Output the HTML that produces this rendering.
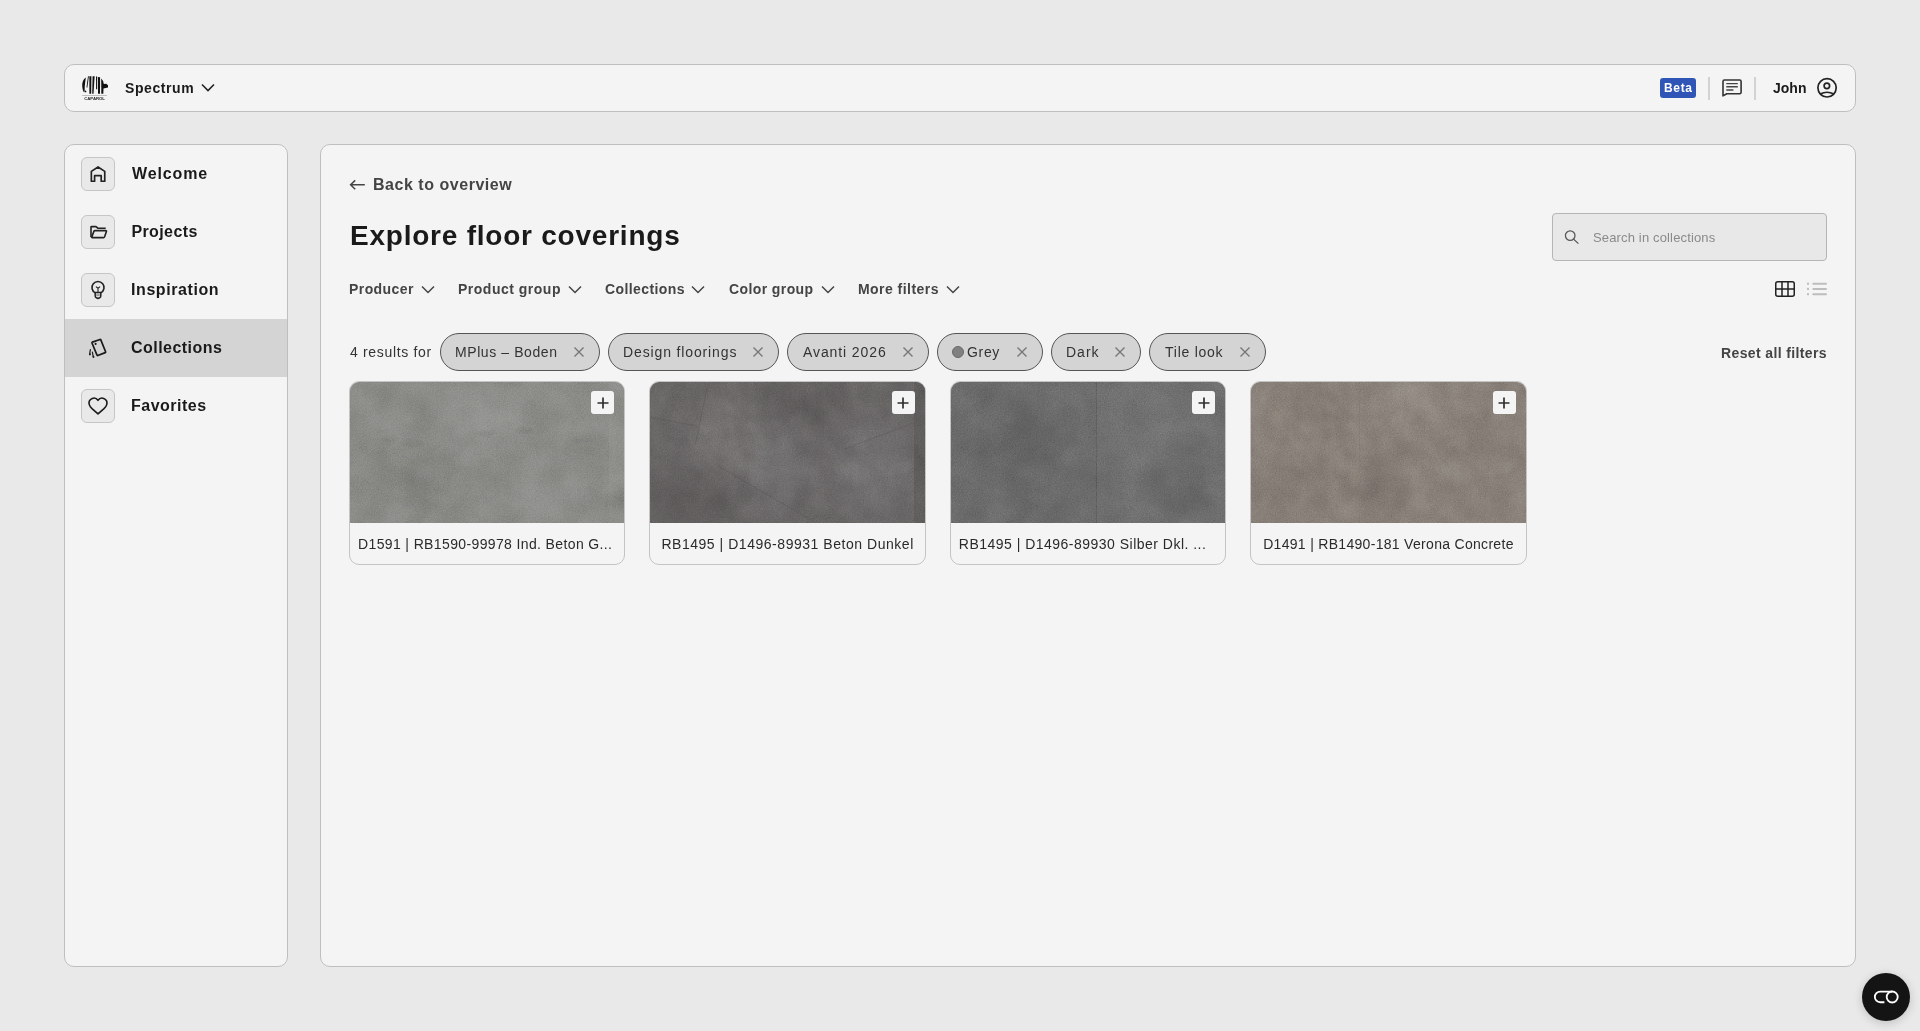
<!DOCTYPE html>
<html><head><meta charset="utf-8">
<style>
*{box-sizing:border-box;margin:0;padding:0}
html,body{width:1920px;height:1031px;overflow:hidden;background:#e9e9e9;font-family:"Liberation Sans",sans-serif;color:#1a1a1a}
.abs{position:absolute}
.panel{position:absolute;background:#f4f4f4;border:1px solid #bfbfbf;border-radius:10px}
.t{position:absolute;white-space:nowrap;line-height:1}
.b{font-weight:bold}
.icobox{position:absolute;left:16px;width:34px;height:34px;border:1px solid #c6c6c6;border-radius:6px;background:#e9e9e9}
.icobox svg{position:absolute;left:0;top:0}
.nav{position:absolute;left:0;width:222px;height:58px}
.nav .t{left:66px;font-size:16px;font-weight:bold;color:#1a1a1a}
.chip{position:absolute;top:333px;height:38px;border:1px solid #555;border-radius:19px;background:#d4d4d4}
.chip .t{top:11px;font-size:14px;color:#333}
.chip svg{position:absolute;top:13px}
.card{position:absolute;top:381px;width:276.4px;height:184px;border:1px solid #c4c4c4;border-radius:10px;background:#f4f4f4;overflow:hidden}
.card .img{position:absolute;left:-1px;top:-1px;right:-1px;height:142px;overflow:hidden}
.card .img svg{display:block}
.card .cap{position:absolute;left:9px;top:155px;font-size:14px;line-height:1;white-space:nowrap;color:#2a2a2a}
.plus{position:absolute;right:10px;top:9px;width:23px;height:23px;border-radius:3px;background:#f4f4f4}
.plus svg{position:absolute;left:5.5px;top:5.5px}
.flt{position:absolute;top:282px;font-size:14px;font-weight:bold;color:#444}
</style></head>
<body>

<svg width="0" height="0" style="position:absolute">
<defs>
<filter id="grain" x="0" y="0" width="100%" height="100%" color-interpolation-filters="sRGB"><feTurbulence type="fractalNoise" baseFrequency="0.75" numOctaves="2" seed="7" stitchTiles="stitch"/><feColorMatrix type="matrix" values="0.33 0.33 0.33 0 0  0.33 0.33 0.33 0 0  0.33 0.33 0.33 0 0  0 0 0 0 1"/></filter>
<filter id="blot" x="0" y="0" width="100%" height="100%" color-interpolation-filters="sRGB"><feTurbulence type="fractalNoise" baseFrequency="0.035" numOctaves="4" seed="11"/><feColorMatrix type="matrix" values="0.33 0.33 0.33 0 0  0.33 0.33 0.33 0 0  0.33 0.33 0.33 0 0  0 0 0 0 1"/></filter>
<filter id="blot2" x="0" y="0" width="100%" height="100%" color-interpolation-filters="sRGB"><feTurbulence type="fractalNoise" baseFrequency="0.05" numOctaves="4" seed="23"/><feColorMatrix type="matrix" values="0.33 0.33 0.33 0 0  0.33 0.33 0.33 0 0  0.33 0.33 0.33 0 0  0 0 0 0 1"/></filter>
<filter id="bl6" x="-50%" y="-50%" width="200%" height="200%"><feGaussianBlur stdDeviation="6"/></filter>
<filter id="bl12" x="-50%" y="-50%" width="200%" height="200%"><feGaussianBlur stdDeviation="12"/></filter>
<filter id="bl2" x="-50%" y="-50%" width="200%" height="200%"><feGaussianBlur stdDeviation="1.5"/></filter>
</defs></svg>
<!-- header -->
<div class="panel" style="left:64px;top:64px;width:1792px;height:48px;"></div>
<svg class="abs" style="left:81px;top:75px" width="28" height="26" viewBox="0 0 28 26">
  <g fill="#111">
    <path d="M4.8 2.4 C2.2 4 1.1 7.5 1.2 10.5 C1.3 13.5 1.9 15.5 2.7 16.9 L3.6 16.2 C3.6 13 3.8 9.5 4.3 6.5 C4.5 5 4.7 3.6 4.8 2.4 Z"/>
    <circle cx="4.4" cy="16.4" r="0.95"/>
    <path d="M7 1.2 L7.9 1.2 L6.3 12.8 L5.5 12.2 Z"/>
    <path d="M8.4 1.2 L10.4 1.2 L10.2 18.8 L8.4 18.8 Z"/>
    <path d="M11.6 1.2 L13.6 1.3 L12.5 18.8 L11.2 18.8 Z"/>
    <path d="M15 1.5 L16.1 1.5 L16.1 14.2 L15.1 14.2 Z"/>
    <path d="M16.9 2 L19.1 2.3 L19 18.8 L17 18.8 Z"/>
    <path d="M20.2 3.5 Q22.5 5.5 22.8 9 L25.2 8.8 L27 10.2 L27 12.6 L22.5 13.6 L22.3 18.8 L20.3 18.8 Z"/>
  </g>
  <rect x="1.2" y="20.3" width="24.8" height="0.6" fill="#9a9a9a"/>
  <text x="13.6" y="24.9" font-size="4.4" text-anchor="middle" font-family="Liberation Sans" font-weight="bold" fill="#222" textLength="20.8" lengthAdjust="spacingAndGlyphs">CAPAROL</text>
</svg>
<div id="spectrum" class="t b" style="left:125.00px;top:81px;font-size:14px;letter-spacing:0.572px">Spectrum</div>
<svg class="abs" style="left:201px;top:83px" width="14" height="9" viewBox="0 0 14 9"><path d="M1 1.5 L7 7.5 L13 1.5" fill="none" stroke="#222" stroke-width="1.6"/></svg>

<div class="abs" style="left:1660px;top:78px;width:36px;height:20px;background:#2f56b6;border-radius:3px"></div>
<div id="beta" class="t b" style="left:1664.00px;top:82px;font-size:12px;color:#fff;letter-spacing:0.667px">Beta</div>
<div class="abs" style="left:1708px;top:77px;width:2px;height:23px;background:#d2d2d2"></div>
<svg class="abs" style="left:1721px;top:78px" width="22" height="20" viewBox="0 0 22 20"><path d="M2 17.9 V3.4 Q2 2 3.4 2 H18.7 Q20.1 2 20.1 3.4 V14.3 Q20.1 15.7 18.7 15.7 H5.8 Z" fill="none" stroke="#333" stroke-width="1.6" stroke-linejoin="round"/><path d="M5.3 5.6 H16.8 M5.3 8.7 H16.8 M5.3 12 H12.4" stroke="#444" stroke-width="1.4"/></svg>
<div class="abs" style="left:1754px;top:77px;width:2px;height:23px;background:#d2d2d2"></div>
<div id="john" class="t b" style="left:1773.00px;top:81px;font-size:14px;letter-spacing:-0.000px">John</div>
<svg class="abs" style="left:1816px;top:77px" width="22" height="22" viewBox="0 0 22 22"><circle cx="11.05" cy="10.85" r="9.15" fill="none" stroke="#222" stroke-width="1.7"/><circle cx="10.85" cy="8.85" r="2.75" fill="none" stroke="#222" stroke-width="1.7"/><path d="M4.3 17.1 Q11 13.4 17.8 17.1" fill="none" stroke="#222" stroke-width="1.7"/></svg>

<!-- sidebar -->
<div class="panel" style="left:64px;top:144px;width:224px;height:823px;overflow:hidden">
  <div class="nav" style="top:0"><div class="icobox" style="top:12px">
    <svg width="32" height="32" viewBox="0 0 32 32"><path d="M12.6 23.25 V17.7 H19.2 V23.25 H22.75 V13.4 L16.05 8.95 L9.35 13.4 V23.25 Z" fill="none" stroke="#222" stroke-width="1.7" stroke-linejoin="round"/></svg>
  </div><div id="welcome" class="t" style="left:67.00px;top:20.8px;letter-spacing:0.867px">Welcome</div></div>
  <div class="nav" style="top:58px"><div class="icobox" style="top:12px">
    <svg width="32" height="32" viewBox="0 0 32 32"><path d="M9 21 V10.8 Q9 10.6 9.8 10.6 H14 L15.8 12.2 H23.7" fill="none" stroke="#222" stroke-width="1.6" stroke-linejoin="round"/><path d="M9.6 21.4 L11.9 15.4 Q12.2 14.6 13 14.6 H23.8 Q24.7 14.6 24.4 15.5 L22.6 20.8 Q22.3 21.6 21.5 21.6 H10 Z" fill="none" stroke="#222" stroke-width="1.6" stroke-linejoin="round"/></svg>
  </div><div id="projects" class="t" style="left:66.40px;top:20.8px;letter-spacing:0.400px">Projects</div></div>
  <div class="nav" style="top:116px"><div class="icobox" style="top:12px">
    <svg width="32" height="32" viewBox="0 0 32 32"><path d="M13.3 18.9 A6.05 6.05 0 1 1 18.7 18.9" fill="none" stroke="#222" stroke-width="1.6"/><path d="M13.2 18.6 V22 Q13.2 23.2 14.4 23.8 L16 24.5 L17.6 23.8 Q18.8 23.2 18.8 22 V18.6 Z" fill="none" stroke="#222" stroke-width="1.5" stroke-linejoin="round"/><path d="M14.2 20.3 H17.8 M14.2 21.6 H17.8" stroke="#888" stroke-width="0.9"/><path d="M13.9 12.6 L16 14.3 L18.1 12.6 M16 14.3 V18.4" fill="none" stroke="#222" stroke-width="1.1"/></svg>
  </div><div id="inspiration" class="t" style="left:66.00px;top:20.8px;letter-spacing:0.580px">Inspiration</div></div>
  <div class="nav" style="top:174px;background:#d4d4d4"><div class="icobox" style="top:12px;border-color:transparent;background:transparent">
    <svg width="32" height="32" viewBox="0 0 32 32"><path d="M10.4 10.1 L18 7.5 Q18.6 7.3 18.8 7.9 L23.6 19.8 Q23.8 20.4 23.2 20.6 L15.8 23.5 Q15.2 23.7 15 23.1 L10 11 Q9.8 10.3 10.4 10.1 Z" fill="none" stroke="#1a1a1a" stroke-width="1.7" stroke-linejoin="round"/><circle cx="13.6" cy="11.9" r="1.05" fill="#1a1a1a"/><path d="M8.4 17.6 Q7.6 20.5 7.8 22.6" fill="none" stroke="#1a1a1a" stroke-width="1.2" stroke-linecap="round"/><path d="M10.4 20 Q10.7 23 11.6 25.2" fill="none" stroke="#1a1a1a" stroke-width="1.2" stroke-linecap="round"/><circle cx="7.9" cy="22.3" r="0.95" fill="#1a1a1a"/><circle cx="11.4" cy="24.7" r="0.95" fill="#1a1a1a"/></svg>
  </div><div id="collections" class="t" style="left:66.00px;top:20.8px;letter-spacing:0.460px">Collections</div></div>
  <div class="nav" style="top:232px"><div class="icobox" style="top:12px">
    <svg width="32" height="32" viewBox="0 0 32 32"><path d="M16 10.3 C14.6 8.3 12.3 7.6 10.3 8.4 C7.9 9.4 6.6 12 7.2 14.4 C7.6 16 8.6 17.3 10 18.6 L16 23.9 L22 18.6 C23.4 17.3 24.4 16 24.8 14.4 C25.4 12 24.1 9.4 21.7 8.4 C19.7 7.6 17.4 8.3 16 10.3 Z" fill="none" stroke="#1a1a1a" stroke-width="1.6" stroke-linejoin="round"/></svg>
  </div><div id="favorites" class="t" style="left:66.00px;top:20.8px;letter-spacing:0.500px">Favorites</div></div>
</div>

<!-- main -->
<div class="panel" style="left:320px;top:144px;width:1536px;height:823px;"></div>
<svg class="abs" style="left:349px;top:177px" width="17" height="16" viewBox="0 0 17 16"><path d="M15.8 7.8 H1.6 M6.2 3.4 L1.6 7.8 L6.2 12.2" fill="none" stroke="#444" stroke-width="1.5"/></svg>
<div id="back" class="t b" style="left:373.00px;top:177px;font-size:16px;color:#444;letter-spacing:0.533px">Back to overview</div>
<div id="title" class="t b" style="left:350.00px;top:222px;font-size:28px;color:#1a1a1a;letter-spacing:0.772px">Explore floor coverings</div>

<div class="abs" style="left:1552px;top:213px;width:275px;height:48px;border:1px solid #b5b5b5;border-radius:4px;background:#e8e8e8"></div>
<svg class="abs" style="left:1563px;top:229px" width="18" height="18" viewBox="0 0 18 18"><circle cx="7.2" cy="6.6" r="4.8" fill="none" stroke="#555" stroke-width="1.25"/><path d="M10.6 10.1 L15.4 14.6" stroke="#555" stroke-width="1.25"/></svg>
<div id="search" class="t" style="left:1593.00px;top:231px;font-size:13px;color:#8a8a8a;letter-spacing:0.150px">Search in collections</div>

<div id="producer" class="flt t" style="left:349.00px;letter-spacing:0.428px">Producer</div>
<svg class="abs" style="left:421px;top:285px" width="14" height="9" viewBox="0 0 14 9"><path d="M1 1.5 L7 7.5 L13 1.5" fill="none" stroke="#444" stroke-width="1.5"/></svg>
<div id="pgroup" class="flt t" style="left:458.00px;letter-spacing:0.500px">Product group</div>
<svg class="abs" style="left:568px;top:285px" width="14" height="9" viewBox="0 0 14 9"><path d="M1 1.5 L7 7.5 L13 1.5" fill="none" stroke="#444" stroke-width="1.5"/></svg>
<div id="fcoll" class="flt t" style="left:605.00px;letter-spacing:0.400px">Collections</div>
<svg class="abs" style="left:691px;top:285px" width="14" height="9" viewBox="0 0 14 9"><path d="M1 1.5 L7 7.5 L13 1.5" fill="none" stroke="#444" stroke-width="1.5"/></svg>
<div id="cgroup" class="flt t" style="left:729.00px;letter-spacing:0.400px">Color group</div>
<svg class="abs" style="left:821px;top:285px" width="14" height="9" viewBox="0 0 14 9"><path d="M1 1.5 L7 7.5 L13 1.5" fill="none" stroke="#444" stroke-width="1.5"/></svg>
<div id="more" class="flt t" style="left:858.00px;letter-spacing:0.453px">More filters</div>
<svg class="abs" style="left:946px;top:285px" width="14" height="9" viewBox="0 0 14 9"><path d="M1 1.5 L7 7.5 L13 1.5" fill="none" stroke="#444" stroke-width="1.5"/></svg>

<svg class="abs" style="left:1774px;top:280px" width="22" height="18" viewBox="0 0 22 18">
  <rect x="1.75" y="1.75" width="18.5" height="14.5" rx="2" fill="none" stroke="#222" stroke-width="1.5"/>
  <path d="M8 1.75 V16.25 M14 1.75 V16.25 M1.75 9 H20.25" stroke="#222" stroke-width="1.5"/>
</svg>
<svg class="abs" style="left:1805px;top:280px" width="24" height="18" viewBox="0 0 24 18">
  <g fill="#bdbdbd"><rect x="2" y="2.7" width="2" height="2"/><rect x="2" y="7.9" width="2" height="2"/><rect x="2" y="13.2" width="2" height="2"/></g>
  <path d="M8.3 3.7 H21 M8.3 8.9 H21 M8.3 14.2 H21" stroke="#bdbdbd" stroke-width="2" stroke-linecap="round"/>
</svg>

<div id="results" class="t" style="left:350.00px;top:345px;font-size:14px;color:#333;letter-spacing:0.665px">4 results for</div>

<div class="chip" style="left:440px;width:160px"><div id="c_mplus" class="t" style="left:14.00px;letter-spacing:0.584px">MPlus – Boden</div><svg style="left:133px" width="10" height="10" viewBox="0 0 10 10"><path d="M0.5 0.5 L9.5 9.5 M9.5 0.5 L0.5 9.5" stroke="#777" stroke-width="1.4"/></svg></div>
<div class="chip" style="left:608px;width:171px"><div id="c_design" class="t" style="left:14.00px;letter-spacing:0.867px">Design floorings</div><svg style="left:144px" width="10" height="10" viewBox="0 0 10 10"><path d="M0.5 0.5 L9.5 9.5 M9.5 0.5 L0.5 9.5" stroke="#777" stroke-width="1.4"/></svg></div>
<div class="chip" style="left:787px;width:142px"><div id="c_avanti" class="t" style="left:15.00px;letter-spacing:0.900px">Avanti 2026</div><svg style="left:115px" width="10" height="10" viewBox="0 0 10 10"><path d="M0.5 0.5 L9.5 9.5 M9.5 0.5 L0.5 9.5" stroke="#777" stroke-width="1.4"/></svg></div>
<div class="chip" style="left:937px;width:106px"><div class="abs" style="left:14px;top:12px;width:12px;height:12px;border-radius:50%;background:#808080;border:1px solid #6a6a6a"></div><div id="c_grey" class="t" style="left:29.00px;letter-spacing:0.666px">Grey</div><svg style="left:79px" width="10" height="10" viewBox="0 0 10 10"><path d="M0.5 0.5 L9.5 9.5 M9.5 0.5 L0.5 9.5" stroke="#777" stroke-width="1.4"/></svg></div>
<div class="chip" style="left:1051px;width:90px"><div id="c_dark" class="t" style="left:14.00px;letter-spacing:0.999px">Dark</div><svg style="left:63px" width="10" height="10" viewBox="0 0 10 10"><path d="M0.5 0.5 L9.5 9.5 M9.5 0.5 L0.5 9.5" stroke="#777" stroke-width="1.4"/></svg></div>
<div class="chip" style="left:1149px;width:117px"><div id="c_tile" class="t" style="left:15.00px;letter-spacing:0.750px">Tile look</div><svg style="left:90px" width="10" height="10" viewBox="0 0 10 10"><path d="M0.5 0.5 L9.5 9.5 M9.5 0.5 L0.5 9.5" stroke="#777" stroke-width="1.4"/></svg></div>

<div id="reset" class="t b" style="left:1721.00px;top:346px;font-size:14px;color:#444;letter-spacing:0.374px">Reset all filters</div>

<!-- cards -->
<div class="card" style="left:349px">
  <div class="img"><svg width="278" height="143" viewBox="0 0 278 143">
<rect width="278" height="143" fill="#8a8a87"/>
<g filter="url(#bl12)"><ellipse cx="140" cy="40" rx="45" ry="10" fill="#9a9a97"/><ellipse cx="60" cy="100" rx="50" ry="25" fill="#838380"/><ellipse cx="200" cy="115" rx="50" ry="20" fill="#8f8f8c"/></g>
<g filter="url(#bl2)" opacity="0.3"><ellipse cx="40" cy="59" rx="8" ry="2.5" fill="#6f6f6c"/><ellipse cx="65" cy="63" rx="10" ry="3.5" fill="#6f6f6c"/><ellipse cx="135" cy="53" rx="10" ry="3" fill="#747471"/><ellipse cx="175" cy="50" rx="9" ry="3" fill="#747471"/><ellipse cx="235" cy="59" rx="12" ry="2.5" fill="#717170"/></g>
<rect x="260" y="0" width="18" height="143" fill="#8e8e8b"/>
<g filter="url(#bl6)"><ellipse cx="272" cy="118" rx="8" ry="10" fill="#737370"/></g>
<rect width="278" height="143" filter="url(#blot)" opacity="0.15" style="mix-blend-mode:overlay"/>
<rect width="278" height="143" filter="url(#grain)" opacity="0.22" style="mix-blend-mode:overlay"/>
</svg></div>
  <div class="plus"><svg width="12" height="12" viewBox="0 0 12 12"><path d="M6 0.5 V11.5 M0.5 6 H11.5" stroke="#2e2e2e" stroke-width="1.7"/></svg></div>
  <div class="cap" id="cap1" style="left:8.00px;letter-spacing:0.370px">D1591 | RB1590-99978 Ind. Beton G...</div>
</div>
<div class="card" style="left:649.4px">
  <div class="img"><svg width="278" height="143" viewBox="0 0 278 143">
<rect width="278" height="143" fill="#686565"/>
<g filter="url(#bl12)"><ellipse cx="75" cy="55" rx="30" ry="45" fill="#747171"/><ellipse cx="130" cy="85" rx="30" ry="40" fill="#726f6f"/><ellipse cx="225" cy="90" rx="40" ry="45" fill="#727070"/><ellipse cx="45" cy="120" rx="50" ry="25" fill="#5e5b5b"/><ellipse cx="150" cy="20" rx="40" ry="20" fill="#5f5c5c"/></g>
<g stroke="#5a5757" stroke-width="1" fill="none" opacity="0.45"><path d="M69 85 L162 139"/><path d="M0 36 L48 45"/><path d="M58 7 L46 65"/><path d="M195 68 L265 42"/></g>
<rect x="265" y="0" width="13" height="143" fill="#5f5c5c"/>
<rect width="278" height="143" filter="url(#blot2)" opacity="0.16" style="mix-blend-mode:overlay"/>
<rect width="278" height="143" filter="url(#grain)" opacity="0.22" style="mix-blend-mode:overlay"/>
</svg></div>
  <div class="plus"><svg width="12" height="12" viewBox="0 0 12 12"><path d="M6 0.5 V11.5 M0.5 6 H11.5" stroke="#2e2e2e" stroke-width="1.7"/></svg></div>
  <div class="cap" id="cap2" style="left:11.00px;letter-spacing:0.533px">RB1495 | D1496-89931 Beton Dunkel</div>
</div>
<div class="card" style="left:949.8px">
  <div class="img"><svg width="278" height="143" viewBox="0 0 278 143">
<rect width="278" height="143" fill="#6c6b6b"/>
<rect x="147" y="0" width="131" height="143" fill="#706f6f"/>
<g filter="url(#bl12)"><ellipse cx="70" cy="60" rx="40" ry="25" fill="#646363"/><ellipse cx="190" cy="50" rx="30" ry="30" fill="#757474"/><ellipse cx="230" cy="110" rx="35" ry="25" fill="#686767"/></g>
<rect x="146" y="0" width="1" height="143" fill="#626161"/>
<rect width="278" height="143" filter="url(#blot)" opacity="0.16" style="mix-blend-mode:overlay"/>
<rect width="278" height="143" filter="url(#grain)" opacity="0.25" style="mix-blend-mode:overlay"/>
</svg></div>
  <div class="plus"><svg width="12" height="12" viewBox="0 0 12 12"><path d="M6 0.5 V11.5 M0.5 6 H11.5" stroke="#2e2e2e" stroke-width="1.7"/></svg></div>
  <div class="cap" id="cap3" style="left:8.00px;letter-spacing:0.485px">RB1495 | D1496-89930 Silber Dkl. ...</div>
</div>
<div class="card" style="left:1250.2px">
  <div class="img"><svg width="278" height="143" viewBox="0 0 278 143">
<rect width="278" height="143" fill="#898179"/>
<g filter="url(#bl12)"><ellipse cx="125" cy="105" rx="18" ry="35" fill="#7b736d"/><ellipse cx="165" cy="20" rx="30" ry="20" fill="#938b83"/><ellipse cx="225" cy="50" rx="20" ry="15" fill="#7f7771"/><ellipse cx="40" cy="110" rx="40" ry="25" fill="#837b74"/><ellipse cx="70" cy="30" rx="30" ry="20" fill="#837b74"/></g>
<rect x="109" y="0" width="1" height="143" fill="#807870" opacity="0.6"/>
<rect width="278" height="143" filter="url(#blot2)" opacity="0.15" style="mix-blend-mode:overlay"/>
<rect width="278" height="143" filter="url(#grain)" opacity="0.22" style="mix-blend-mode:overlay"/>
</svg></div>
  <div class="plus"><svg width="12" height="12" viewBox="0 0 12 12"><path d="M6 0.5 V11.5 M0.5 6 H11.5" stroke="#2e2e2e" stroke-width="1.7"/></svg></div>
  <div class="cap" id="cap4" style="left:12.00px;letter-spacing:0.303px">D1491 | RB1490-181 Verona Concrete</div>
</div>

<!-- fab -->
<div class="abs" style="left:1862px;top:973px;width:48px;height:48px;border-radius:50%;background:#141414;box-shadow:0 2px 10px rgba(0,0,0,0.18)"></div>
<svg class="abs" style="left:1872px;top:988px" width="28" height="18" viewBox="0 0 28 18"><path d="M12.4 14.25 H8.2 A5.35 5.35 0 0 1 8.2 3.55 H20.2" fill="none" stroke="#fff" stroke-width="1.8"/><circle cx="20.2" cy="9" r="5.5" fill="none" stroke="#fff" stroke-width="1.8"/></svg>

</body></html>
